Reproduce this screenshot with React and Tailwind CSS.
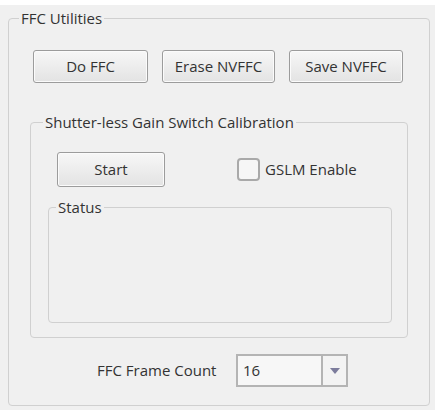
import React, { useState } from 'react';

const font = { fontFamily: '"Open Sans", "Noto Sans", "DejaVu Sans", sans-serif' };

// classic raised push button
function PushButton({ className = '', children }) {
  return (
    <button
      className={`h-[33px] rounded-[3px] border border-[#9c9c9c] bg-gradient-to-b from-[#f7f7f7] to-[#e3e3e3] text-[15px] leading-none text-[#333] shadow-[inset_0_0_0_1px_#fbfbfb] ${className}`}
    >
      {children}
    </button>
  );
}

function GroupBox({ title, className = '', legendClass = '', children }) {
  return (
    <fieldset className={`rounded-[4px] border border-[#d0d0d0] ${className}`}>
      <legend className={`h-[20px] px-[2px] text-[15px] leading-[20px] text-[#333] ${legendClass}`}>
        {title}
      </legend>
      {children}
    </fieldset>
  );
}

export default function App() {
  const [gslm, setGslm] = useState(false);

  return (
    <div className="w-[435px] h-[410px] bg-[#f0f0f0] border-t-[5px] border-white" style={font}>
      <GroupBox title="FFC Utilities" className="ml-[8px] mt-[3px] w-[422px] h-[398px]" legendClass="ml-[10px]">
        <div className="pl-[24px] pt-[22px]">
          {/* top row of actions */}
          <div className="flex">
            <PushButton className="w-[115px]">Do FFC</PushButton>
            <PushButton className="ml-[14px] w-[113px]">Erase NVFFC</PushButton>
            <PushButton className="ml-[14px] w-[114px]">Save NVFFC</PushButton>
          </div>
        </div>

        <GroupBox
          title="Shutter-less Gain Switch Calibration"
          className="ml-[21px] mt-[29px] w-[378px]"
          legendClass="ml-[12px]"
        >
          <div className="pl-[26px] pt-[20px] pb-[14px]">
            <div className="flex items-center">
              <PushButton className="h-[35px] w-[108px]">Start</PushButton>
              <label className="ml-[72px] flex items-center gap-[5px] text-[15px] text-[#333]">
                <span
                  onClick={() => setGslm(!gslm)}
                  className="flex h-[23px] w-[23px] items-center justify-center rounded-[4px] border-2 border-[#a9a9a9] bg-[#f6f6f6]"
                >
                  {gslm && <span className="text-[13px] leading-none">✓</span>}
                </span>
                GSLM Enable
              </label>
            </div>

            <GroupBox title="Status" className="-ml-[9px] mt-[10px] h-[126px] w-[344px]" legendClass="ml-[7px]" />
          </div>
        </GroupBox>

        {/* frame count selector */}
        <div className="mt-[16px] flex items-center pl-[88px]">
          <span className="w-[139px] text-[15px] text-[#333]">FFC Frame Count</span>
          <div className="flex h-[33px] w-[112px] border-2 border-[#b4b4b4] bg-[#f7f7f7]">
            <span className="flex-1 pl-[5px] text-[15px] leading-[29px] text-[#333]">16</span>
            <span className="flex w-[25px] items-center justify-center border-l-2 border-[#b4b4b4] bg-[#f3f3f3]">
              <svg width="10" height="6" viewBox="0 0 10 6">
                <path d="M0 0h10L5 6z" fill="#7c7c9c" />
              </svg>
            </span>
          </div>
        </div>
      </GroupBox>
    </div>
  );
}
